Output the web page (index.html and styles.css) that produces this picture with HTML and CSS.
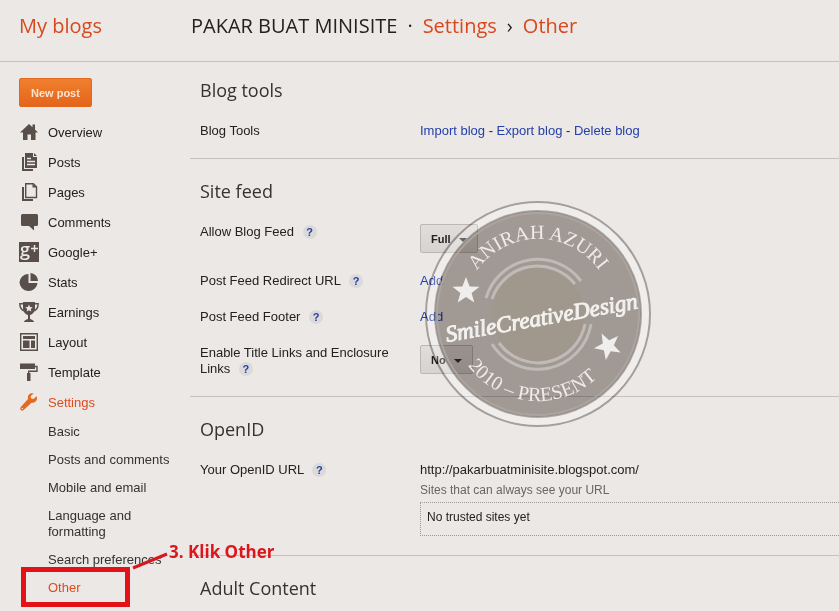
FILE: index.html
```html
<!DOCTYPE html>
<html lang="en">
<head>
<meta charset="utf-8">
<meta name="viewport" content="width=device-width, initial-scale=1">
<title>Settings › Other</title>
<link rel="stylesheet" href="styles.css">
</head>
<body>
<header class="topbar">
  <a class="home" href="#">My blogs</a>
  <div class="crumbs">
    <span>PAKAR BUAT MINISITE</span>
    <span class="dot">·</span>
    <a href="#">Settings</a>
    <span class="angle">›</span>
    <a href="#">Other</a>
  </div>
</header>

<div class="layout">
  <nav class="sidebar">
    <button class="new-post" type="button">New post</button>
    <ul class="menu">
      <li><a href="#"><svg viewBox="0 0 20 20"><path d="M10 1l3.500 3.200V1.500H16v5l3 3H16.500V17H12v-5.500H8.500V17H4V9.500H1z"/></svg>Overview</a></li>
      <li><a href="#"><svg viewBox="0 0 20 20"><path d="M6 0h8v4h4v11H6z"/><path d="M15 0l3 3h-3z"/><path d="M3 4h2v12h9v2H3z"/><path class="cut" d="M8 5.500h4M8 8.500h8M8 11.500h8"/></svg>Posts</a></li>
      <li><a href="#"><svg viewBox="0 0 20 20"><path class="line" d="M6.700.7h7.600l3.200 3.200v10.600H6.700z"/><path d="M13.500.5v4h4z"/><path d="M3 4h2v12h9v2H3z"/></svg>Pages</a></li>
      <li><a href="#"><svg viewBox="0 0 20 20"><path d="M3.500 1h14A1.500 1.500 0 0 1 19 2.500v9a1.500 1.500 0 0 1-1.500 1.500H15v4.500L10 13H3.500A1.500 1.500 0 0 1 2 11.500v-9A1.500 1.500 0 0 1 3.500 1z"/></svg>Comments</a></li>
      <li><a href="#"><svg viewBox="0 0 20 20"><path d="M0-1h20v20H0z"/><text class="gplus" x="1" y="13">g</text><path class="cut" d="M12 5.500h7M15.500 2v7"/></svg>Google+</a></li>
      <li><a href="#"><svg viewBox="0 0 20 20"><path d="M9.500 1v9h9A9 8.500 0 1 1 9.500 1z"/><path d="M11.500 0a8 8 0 0 1 7.500 8h-7.500z"/></svg>Stats</a></li>
      <li><a href="#"><svg viewBox="0 0 20 20"><path d="M4-1h12v6c0 4-2.500 6.500-5 7v4c2 .5 4 1.500 4 3H5c0-1.500 2-2.500 4-3v-4c-2.500-.5-5-3-5-7z"/><path class="thin" d="M4.500.7H.8c0 4 2 6.500 5 7.500M15.500.7h3.700c0 4-2 6.500-5 7.500"/><path class="star" d="M10 1.500l1.100 2.400 2.600.3-1.900 1.800.5 2.600L10 7.300 7.700 8.600l.5-2.600-1.900-1.800 2.600-.3z"/></svg>Earnings</a></li>
      <li><a href="#"><svg viewBox="0 0 20 20"><path class="line" d="M1.700.7h16.600v16.600H1.700z"/><path d="M4 3h12v3H4zM4 7.500h6.500V15H4zM12 7.500h4V15h-4z"/></svg>Layout</a></li>
      <li><a href="#"><svg viewBox="0 0 20 20"><path d="M1 .5h15v5.500H1z"/><path class="line" d="M15 3.500h3V8.300H9.700V12"/><path d="M8 10h3.500v8H8z"/></svg>Template</a></li>
      <li><a class="current" href="#"><svg viewBox="0 0 20 20"><path d="M17.500 3.200l-3 2.900-2.300-.6-.6-2.200 2.900-2.900C11.500-.7 8.700 1.700 8.800 4.500c0 .8.200 1.300.2 1.600L1.600 14.200a2 2 0 0 0 .2 2.700 2 2 0 0 0 2.800.1l8-7.300c3.200.7 6.700-2.700 4.900-6.500zM3.300 14.700a.8.800 0 1 1 0 1.600.8.800 0 0 1 0-1.600z"/></svg>Settings</a></li>
    </ul>
    <ul class="submenu">
      <li><a href="#">Basic</a></li>
      <li><a href="#">Posts and comments</a></li>
      <li><a href="#">Mobile and email</a></li>
      <li><a href="#">Language and formatting</a></li>
      <li><a href="#">Search preferences</a></li>
      <li><a class="current" href="#">Other</a></li>
    </ul>
  </nav>

  <main class="content">
    <section>
      <h2>Blog tools</h2>
      <div class="row">
        <div>Blog Tools</div>
        <div><a href="#">Import blog</a> - <a href="#">Export blog</a> - <a href="#">Delete blog</a></div>
      </div>
    </section>
    <section>
      <h2>Site feed</h2>
      <div class="row">
        <div><label for="feed">Allow Blog Feed</label> <a class="help" href="#">?</a></div>
        <div><span class="picker"><select id="feed"><option>Full</option></select></span></div>
      </div>
      <div class="row">
        <div>Post Feed Redirect URL <a class="help" href="#">?</a></div>
        <div><a href="#">Add</a></div>
      </div>
      <div class="row">
        <div>Post Feed Footer <a class="help" href="#">?</a></div>
        <div><a href="#">Add</a></div>
      </div>
      <div class="row">
        <div><label for="links">Enable Title Links and Enclosure Links</label> <a class="help" href="#">?</a></div>
        <div><span class="picker"><select id="links"><option>No</option></select></span></div>
      </div>
    </section>
    <section>
      <h2>OpenID</h2>
      <div class="row">
        <div>Your OpenID URL <a class="help" href="#">?</a></div>
        <div class="openid">
          <div>http://pakarbuatminisite.blogspot.com/</div>
          <div class="hint">Sites that can always see your URL</div>
          <div class="trusted">No trusted sites yet</div>
        </div>
      </div>
    </section>
    <section>
      <h2>Adult Content</h2>
    </section>
  </main>
</div>

<svg class="stamp ink" viewBox="0 0 226 226">
  <circle class="outer" cx="113" cy="113" r="112"/>
  <circle class="disc" cx="113" cy="113" r="103"/>
  <circle class="rim" cx="113" cy="113" r="103"/>
</svg>
<svg class="stamp" viewBox="0 0 226 226">
  <defs>
    <path id="arc-top" d="M38 113a75 75 0 0 1 150 0"/>
    <path id="arc-bottom" d="M26 113a87 87 0 0 0 174 0"/>
    <path id="star" d="M0-14L3.600-4.500 13.500-4.300 5.600 1.900 8.300 11.500 0 6-8.300 11.500-5.600 1.900-13.500-4.300-3.600-4.500z"/>
  </defs>
  <circle class="halo" cx="113" cy="113" r="107"/>
  <circle class="rim-light" cx="113" cy="113" r="101"/>
  <circle class="core" cx="113" cy="114" r="46"/>
  <g class="rings">
    <path d="M61 97A54 54 0 0 1 156 80M166 123A54 54 0 0 1 67 143"/>
    <path d="M67 98A48 48 0 0 1 150 83M160 123A48 48 0 0 1 74 142"/>
  </g>
  <use class="white" href="#star" transform="translate(41 90)"/>
  <use class="white" href="#star" transform="translate(183 145) rotate(-27)"/>
  <text class="ring-text"><textPath href="#arc-top" startOffset="50%">ANIRAH AZURI</textPath></text>
  <text class="ring-text"><textPath href="#arc-bottom" startOffset="47%">2010 – PRESENT</textPath></text>
  <text class="script" x="22" y="141" transform="rotate(-10 22 141)">SmileCreativeDesign</text>
</svg>

<div class="mark-box"></div>
<svg class="mark-line" viewBox="0 0 36 18"><path d="M1 16L35 2"/></svg>
<div class="mark-text">3. Klik Other</div>
</body>
</html>
```

FILE: styles.css
```css
* {
  box-sizing: border-box;
}

body {
  position: relative;
  min-height: 100vh;
  margin: 0;
  background: #ebe8e6;
  color: #222;
  font: 13px/16px "Liberation Sans", Arial, sans-serif;
}

a {
  color: #2540a8;
  text-decoration: none;
}

ul {
  margin: 0;
  padding: 0;
  list-style: none;
}

/* Header */
.topbar {
  display: grid;
  grid-template-columns: 172px 1fr;
  padding: 12px 0 21px 19px;
  border-bottom: 1px solid #c5c1c0;
  font: 20px/28px "Open Sans", sans-serif;
}

.topbar a {
  color: #d9481c;
}

.crumbs {
  display: flex;
  gap: 10px;
}

/* Columns */
.layout {
  display: grid;
  grid-template-columns: 190px 1fr;
}

.sidebar {
  padding: 16px 10px 0 19px;
}

.new-post {
  height: 29px;
  padding: 0 11px;
  margin-bottom: 11px;
  display: block;
  border: 1px solid #e2671f;
  border-radius: 2px;
  background: linear-gradient(#f07f2e, #e4651a);
  color: #fbe3d0;
  font: bold 11px/16px "Liberation Sans", Arial, sans-serif;
}

.menu a {
  display: flex;
  align-items: center;
  gap: 9px;
  height: 30px;
  color: #222;
}

.menu svg {
  width: 20px;
  height: 20px;
  overflow: visible;
  fill: #594f4a;
}

.menu .line,
.menu .thin {
  fill: none;
  stroke: #594f4a;
  stroke-width: 1.400;
}

.menu .cut {
  fill: none;
  stroke: #ebe8e6;
  stroke-width: 1.400;
}

.menu .star {
  fill: #ebe8e6;
}

.menu .gplus {
  fill: #ebe8e6;
  font: 600 18px "Open Sans", sans-serif;
}

.menu .current,
.submenu .current {
  color: #dd4b1f;
}

.menu .current svg {
  fill: #e5691f;
}

.submenu {
  display: grid;
  gap: 12px;
  margin: 6px 0 0 29px;
}

.submenu a {
  display: block;
  color: #333;
}

/* Settings */
section {
  padding: 20px 0 19px 10px;
  border-bottom: 1px solid #c5c1c0;
}

section:first-child {
  padding-top: 16px;
}

section:last-child {
  padding-bottom: 0;
  border: 0;
}

h2 {
  margin: 0 0 21px;
  color: #333;
  font: 18px/24px "Open Sans", sans-serif;
}

section:last-child h2 {
  margin: 0;
}

.row {
  display: grid;
  grid-template-columns: 200px 1fr;
  column-gap: 20px;
}

.row + .row {
  margin-top: 20px;
}

.help {
  display: inline-block;
  width: 14px;
  height: 14px;
  margin: 1px 0 0 5px;
  border-radius: 50%;
  background: #dcdad9;
  font: bold 11px/14px "Liberation Sans", Arial, sans-serif;
  text-align: center;
  vertical-align: top;
}

.picker {
  display: inline-block;
  position: relative;
  vertical-align: top;
}

.picker::after {
  content: "";
  position: absolute;
  top: 14px;
  right: 11px;
  border: 4px solid transparent;
  border-top-color: #333;
  border-bottom: 0;
  pointer-events: none;
}

select {
  appearance: none;
  display: block;
  height: 29px;
  padding: 0 26px 0 10px;
  border: 1px solid #bbb7b4;
  border-radius: 2px;
  background: linear-gradient(#e0dddb, #d6d3d1);
  color: #222;
  font: bold 11px "Liberation Sans", Arial, sans-serif;
}

.openid {
  display: grid;
  gap: 4px;
}

.hint {
  color: #666;
  font-size: 12px;
}

.trusted {
  padding: 6px 6px 10px;
  border: 1px dotted #999;
  border-right: 0;
  font-size: 12px;
}

/* Round stamp laid over the settings */
.stamp {
  position: absolute;
  left: 425px;
  top: 201px;
  width: 226px;
  height: 226px;
  pointer-events: none;
}

.ink {
  mix-blend-mode: multiply;
}

.halo {
  fill: none;
  stroke: #fff;
  stroke-width: 8;
  opacity: .25;
}

.outer {
  fill: none;
  stroke: #b4aeaa;
  stroke-width: 2;
}

.disc {
  fill: #afa8a3;
}

.rim {
  fill: none;
  stroke: #a39b96;
  stroke-width: 2;
}

.rim-light {
  fill: none;
  stroke: #aba49f;
  stroke-width: 2;
}

.core {
  fill: #a0978d;
}

.rings {
  fill: none;
  stroke: #c1bbb7;
  stroke-width: 3;
}

.white {
  fill: #f0eeec;
}

.ring-text {
  fill: #eeebe9;
  font: 20px "Liberation Serif", serif;
  text-anchor: middle;
}

.script {
  fill: #f3f1ef;
  stroke: #f3f1ef;
  stroke-width: 1;
  font: italic 23px "Liberation Serif", serif;
}

/* Red annotation */
.mark-box {
  position: absolute;
  left: 21px;
  top: 567px;
  width: 109px;
  height: 40px;
  border: 5px solid #e31118;
  pointer-events: none;
}

.mark-line {
  position: absolute;
  left: 132px;
  top: 552px;
  width: 36px;
  height: 18px;
  fill: none;
  stroke: #d41a20;
  stroke-width: 3;
  pointer-events: none;
}

.mark-text {
  position: absolute;
  left: 169px;
  top: 540px;
  color: #dc161c;
  font: bold 17px/24px "Open Sans", sans-serif;
}
```
